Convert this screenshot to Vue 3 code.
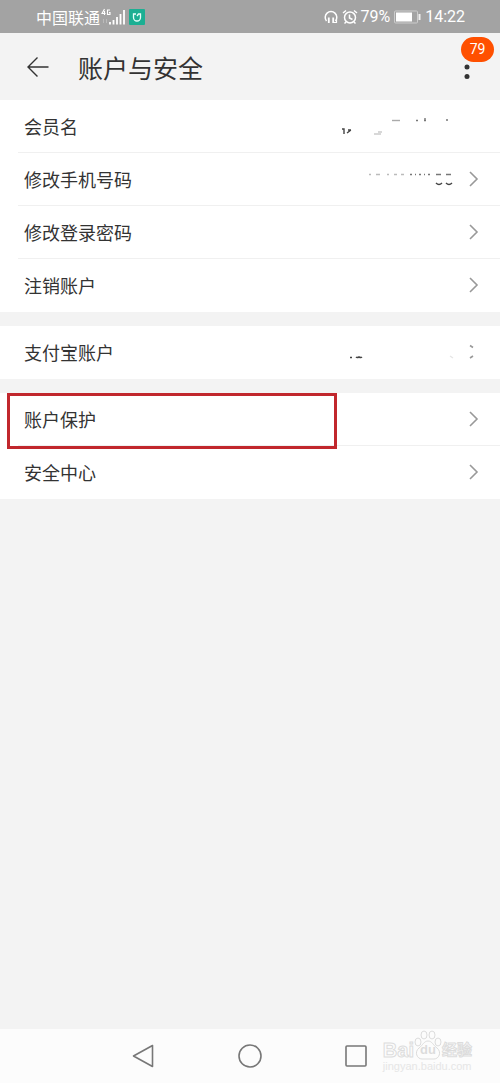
<script setup>
const groups = [
  [
    { label: '会员名', value: 'name', arrow: 'none' },
    { label: '修改手机号码', value: 'phone', arrow: 'full' },
    { label: '修改登录密码', arrow: 'full' },
    { label: '注销账户', arrow: 'full' }
  ],
  [{ label: '支付宝账户', value: 'alipay', arrow: 'partial' }],
  [
    { label: '账户保护', arrow: 'full', marked: true },
    { label: '安全中心', arrow: 'full' }
  ]
]

// Visible remains of the erased account values
const traces = {
  name: [
    { d: 'M12 29h2v5M17 33l4-3M18 30h3', c: '#444' },
    { d: 'M44 34h7M48 32h4', c: '#ccc' },
    { d: 'M62 20.500h8', c: '#aaa' },
    { d: 'M86 20.500h2M94 20.500h2M95 18v2M116 20h2', c: '#777' }
  ],
  phone: [
    { d: 'M39 21.500h2M46 21.500h4M57 21.500h2M64 21.500h3M71 21.500h3', c: '#bbb' },
    { d: 'M80 21.500h2M85 21.500h1M89 21.500h2M94 21.500h1M98 21.500h2M106 21.500h5M116 21.500h5', c: '#777' },
    { d: 'M106 30q3 3 6 0M116 30q3 3 6 0', c: '#444' }
  ],
  alipay: [
    { d: 'M20 31.500h2M26 31q1 1 3 0q2 1 3 0', c: '#444' },
    { d: 'M120 30l3 2', c: '#e5e5e5' }
  ]
}
</script>

<template>
  <div class="screen">
    <div class="status">
      <span class="carrier">中国联通</span>
      <svg class="signal" width="26" height="18" viewBox="0 0 26 18" aria-hidden="true">
        <path d="M4.500 1L2 5.500h3.500M4.500 3v4M10 2H7.500v4.500H10V4.500H9" fill="none" stroke="#fff" stroke-width="1.100" />
        <path d="M3.500 11v4M6.500 11v4" stroke="#bbb" stroke-width="1" />
        <path d="M10 14v2.500M13.500 12v4.500M17 9v7.500M20.500 6v10.500M24 2v14.500" stroke="#fff" stroke-width="1.800" />
      </svg>
      <svg class="app" width="16" height="16" viewBox="0 0 16 16" aria-hidden="true">
        <rect width="16" height="16" rx="1" fill="#1caf93" />
        <path d="M7 5H4.500v3.500a3.500 3.500 0 0 0 7 0V5H9.500L8 7" fill="none" stroke="#e7fffa" stroke-width="1.300" />
      </svg>
      <svg class="headset" width="14" height="16" viewBox="0 0 14 16" fill="none" stroke="#fff" aria-hidden="true">
        <path d="M2.500 12A5.800 5.800 0 1 1 11.500 12" stroke-width="1.500" />
        <path d="M4.800 8.500v5.500M9.200 8.500v5.500" stroke-width="1.800" />
        <path d="M12.500 10v3.500H9.500" stroke-width="1.200" />
      </svg>
      <svg class="alarm" width="16" height="16" viewBox="0 0 16 16" fill="none" stroke="#fff" stroke-width="1.500" aria-hidden="true">
        <circle cx="8" cy="8.500" r="5.500" />
        <path d="M1 4l3-2.500M15 4l-3-2.500M7.500 5.500V9l3 1.500M4 13l-1.500 1.500M12 13l1.500 1.500" />
      </svg>
      <span class="latin">79%</span>
      <svg class="battery" width="27" height="14" viewBox="0 0 27 14" aria-hidden="true">
        <rect x=".5" y="1" width="23" height="12" rx="1" fill="none" stroke="#ccc" />
        <rect x="2" y="2.500" width="16" height="9" fill="#fff" />
        <path d="M25.500 4v6" stroke="#eee" stroke-width="2" />
      </svg>
      <span class="latin">14:22</span>
    </div>

    <header class="header">
      <button class="back" type="button" aria-label="返回">
        <svg width="24" height="22" viewBox="0 0 24 22" fill="none" stroke="#333" stroke-width="1.400">
          <path d="M22.500 11H2M11.500 1.500L2 11l9.500 9.500" />
        </svg>
      </button>
      <h1>账户与安全</h1>
      <button class="more" type="button" aria-label="更多">
        <svg width="6" height="16" viewBox="0 0 6 16" fill="#333">
          <circle cx="3" cy="3" r="2.500" />
          <circle cx="3" cy="12.500" r="2.500" />
        </svg>
        <span class="badge">79</span>
      </button>
    </header>

    <main>
      <section v-for="(group, g) in groups" :key="g" class="group">
        <button
          v-for="row in group"
          :key="row.label"
          type="button"
          class="row"
          :class="{ marked: row.marked }"
        >
          <span class="label">{{ row.label }}</span>
          <svg v-if="row.value" class="value" width="130" height="52" viewBox="0 0 130 52" fill="none" aria-hidden="true">
            <path v-for="t in traces[row.value]" :key="t.d" :d="t.d" :stroke="t.c" stroke-width="1.400" />
          </svg>
          <svg class="arrow" width="10" height="16" viewBox="0 0 10 16" fill="none" stroke="#999" stroke-width="1.600" aria-hidden="true">
            <path v-if="row.arrow === 'full'" d="M1 1l7 7-7 7" />
            <path v-if="row.arrow === 'partial'" d="M1 1.500l3 2M1 14l3-2" />
          </svg>
        </button>
      </section>
    </main>

    <nav class="nav">
      <button type="button" aria-label="后退">
        <svg width="26" height="26" viewBox="0 0 26 26">
          <path d="M21.500 2.500v21L2.500 13z" />
        </svg>
      </button>
      <button type="button" aria-label="主页">
        <svg width="26" height="26" viewBox="0 0 26 26">
          <circle cx="13" cy="13" r="11" />
        </svg>
      </button>
      <button type="button" aria-label="最近任务">
        <svg width="26" height="26" viewBox="0 0 26 26">
          <rect x="3" y="3" width="20" height="20" rx="1" />
        </svg>
      </button>
      <div class="watermark">
        <div class="brand">
          <span class="bai">Bai</span>
          <span class="paw">
            <svg width="28" height="30" viewBox="0 0 28 30" fill="#fcfcfc" stroke="#dcdcdc" aria-hidden="true">
              <ellipse cx="10" cy="5" rx="3" ry="4" />
              <ellipse cx="18" cy="5" rx="3" ry="4" />
              <ellipse cx="4" cy="12" rx="3" ry="4" />
              <ellipse cx="24" cy="12" rx="3" ry="4" />
              <path d="M14 11c4 0 5 4 9 7 5 4 2 11-3 11H8c-5 0-8-7-3-11 4-3 5-7 9-7z" />
            </svg>
            <span class="du">du</span>
          </span>
          <span class="jy">经验</span>
        </div>
        <div class="site">jingyan.baidu.com</div>
      </div>
    </nav>
  </div>
</template>

<style>
body {
  margin: 0;
}
</style>

<style scoped>
.screen {
  display: flex;
  flex-direction: column;
  min-height: 100vh;
  background: #f3f3f3;
  color: #333;
  font-family: "Noto Sans CJK SC", sans-serif;
}
button {
  margin: 0;
  padding: 0;
  border: 0;
  background: none;
  color: inherit;
  font: inherit;
}
svg {
  display: block;
  flex: none;
}
.status {
  display: flex;
  align-items: center;
  height: 33px;
  padding: 0 35px 0 36px;
  background: #a3a3a3;
  color: #fff;
}
.carrier {
  font-size: 16px;
  line-height: 24px;
}
.app {
  margin-left: 3px;
}
.headset {
  margin-left: auto;
}
.alarm {
  margin: 0 2px 0 4px;
}
.latin {
  font-family: Roboto, sans-serif;
  font-size: 16px;
  line-height: 24px;
}
.battery {
  margin: 0 4px;
}
.header {
  display: flex;
  align-items: center;
  height: 67px;
  padding: 0 30px 0 26px;
}
h1 {
  margin: 0 0 0 28px;
  font-size: 25px;
  line-height: 36px;
  font-weight: 400;
}
.more {
  position: relative;
  margin-left: auto;
  padding-top: 10px;
}
.badge {
  position: absolute;
  top: -17px;
  left: -3px;
  width: 33px;
  border-radius: 13px;
  background: #ff5000;
  color: #fff;
  font-family: Roboto, sans-serif;
  font-size: 14px;
  line-height: 25px;
  text-align: center;
}
.group {
  margin-bottom: 14px;
  background: #fff;
}
.row {
  position: relative;
  display: flex;
  align-items: center;
  box-sizing: border-box;
  width: 100%;
  height: 53px;
  padding: 0 21px 2px 24px;
  text-align: left;
}
.row:not(:last-child)::after {
  content: "";
  position: absolute;
  right: 0;
  bottom: 0;
  left: 18px;
  height: 1px;
  background: #f0f0f0;
}
.label {
  flex: 1;
  font-size: 18px;
  line-height: 26px;
}
.value {
  margin-right: 9px;
}
.marked::before {
  content: "";
  position: absolute;
  z-index: 1;
  top: 0;
  left: 7px;
  width: 66%;
  height: 56px;
  box-sizing: border-box;
  border: 3px solid #c1272d;
}
.nav {
  position: relative;
  display: flex;
  align-items: center;
  justify-content: center;
  gap: 80px;
  height: 54px;
  margin-top: auto;
  background: #fcfcfc;
}
.nav button svg {
  fill: none;
  stroke: #777;
  stroke-width: 1.6;
  stroke-linejoin: round;
}
.watermark {
  position: absolute;
  right: 28px;
  bottom: 10px;
  color: #fcfcfc;
  font-family: "Liberation Sans", "Noto Sans CJK SC", sans-serif;
}
.brand {
  display: flex;
  align-items: flex-end;
  height: 30px;
  font-weight: 700;
  line-height: 20px;
  -webkit-text-stroke: 1px #dcdcdc;
}
.bai {
  font-size: 20px;
}
.paw {
  position: relative;
}
.du {
  position: absolute;
  right: 0;
  bottom: 0;
  left: 0;
  color: #dcdcdc;
  font-size: 13px;
  text-align: center;
  -webkit-text-stroke: 0;
}
.jy {
  font-size: 15px;
}
.site {
  color: #e6e6e6;
  font-size: 11px;
  line-height: 13px;
}
</style>
